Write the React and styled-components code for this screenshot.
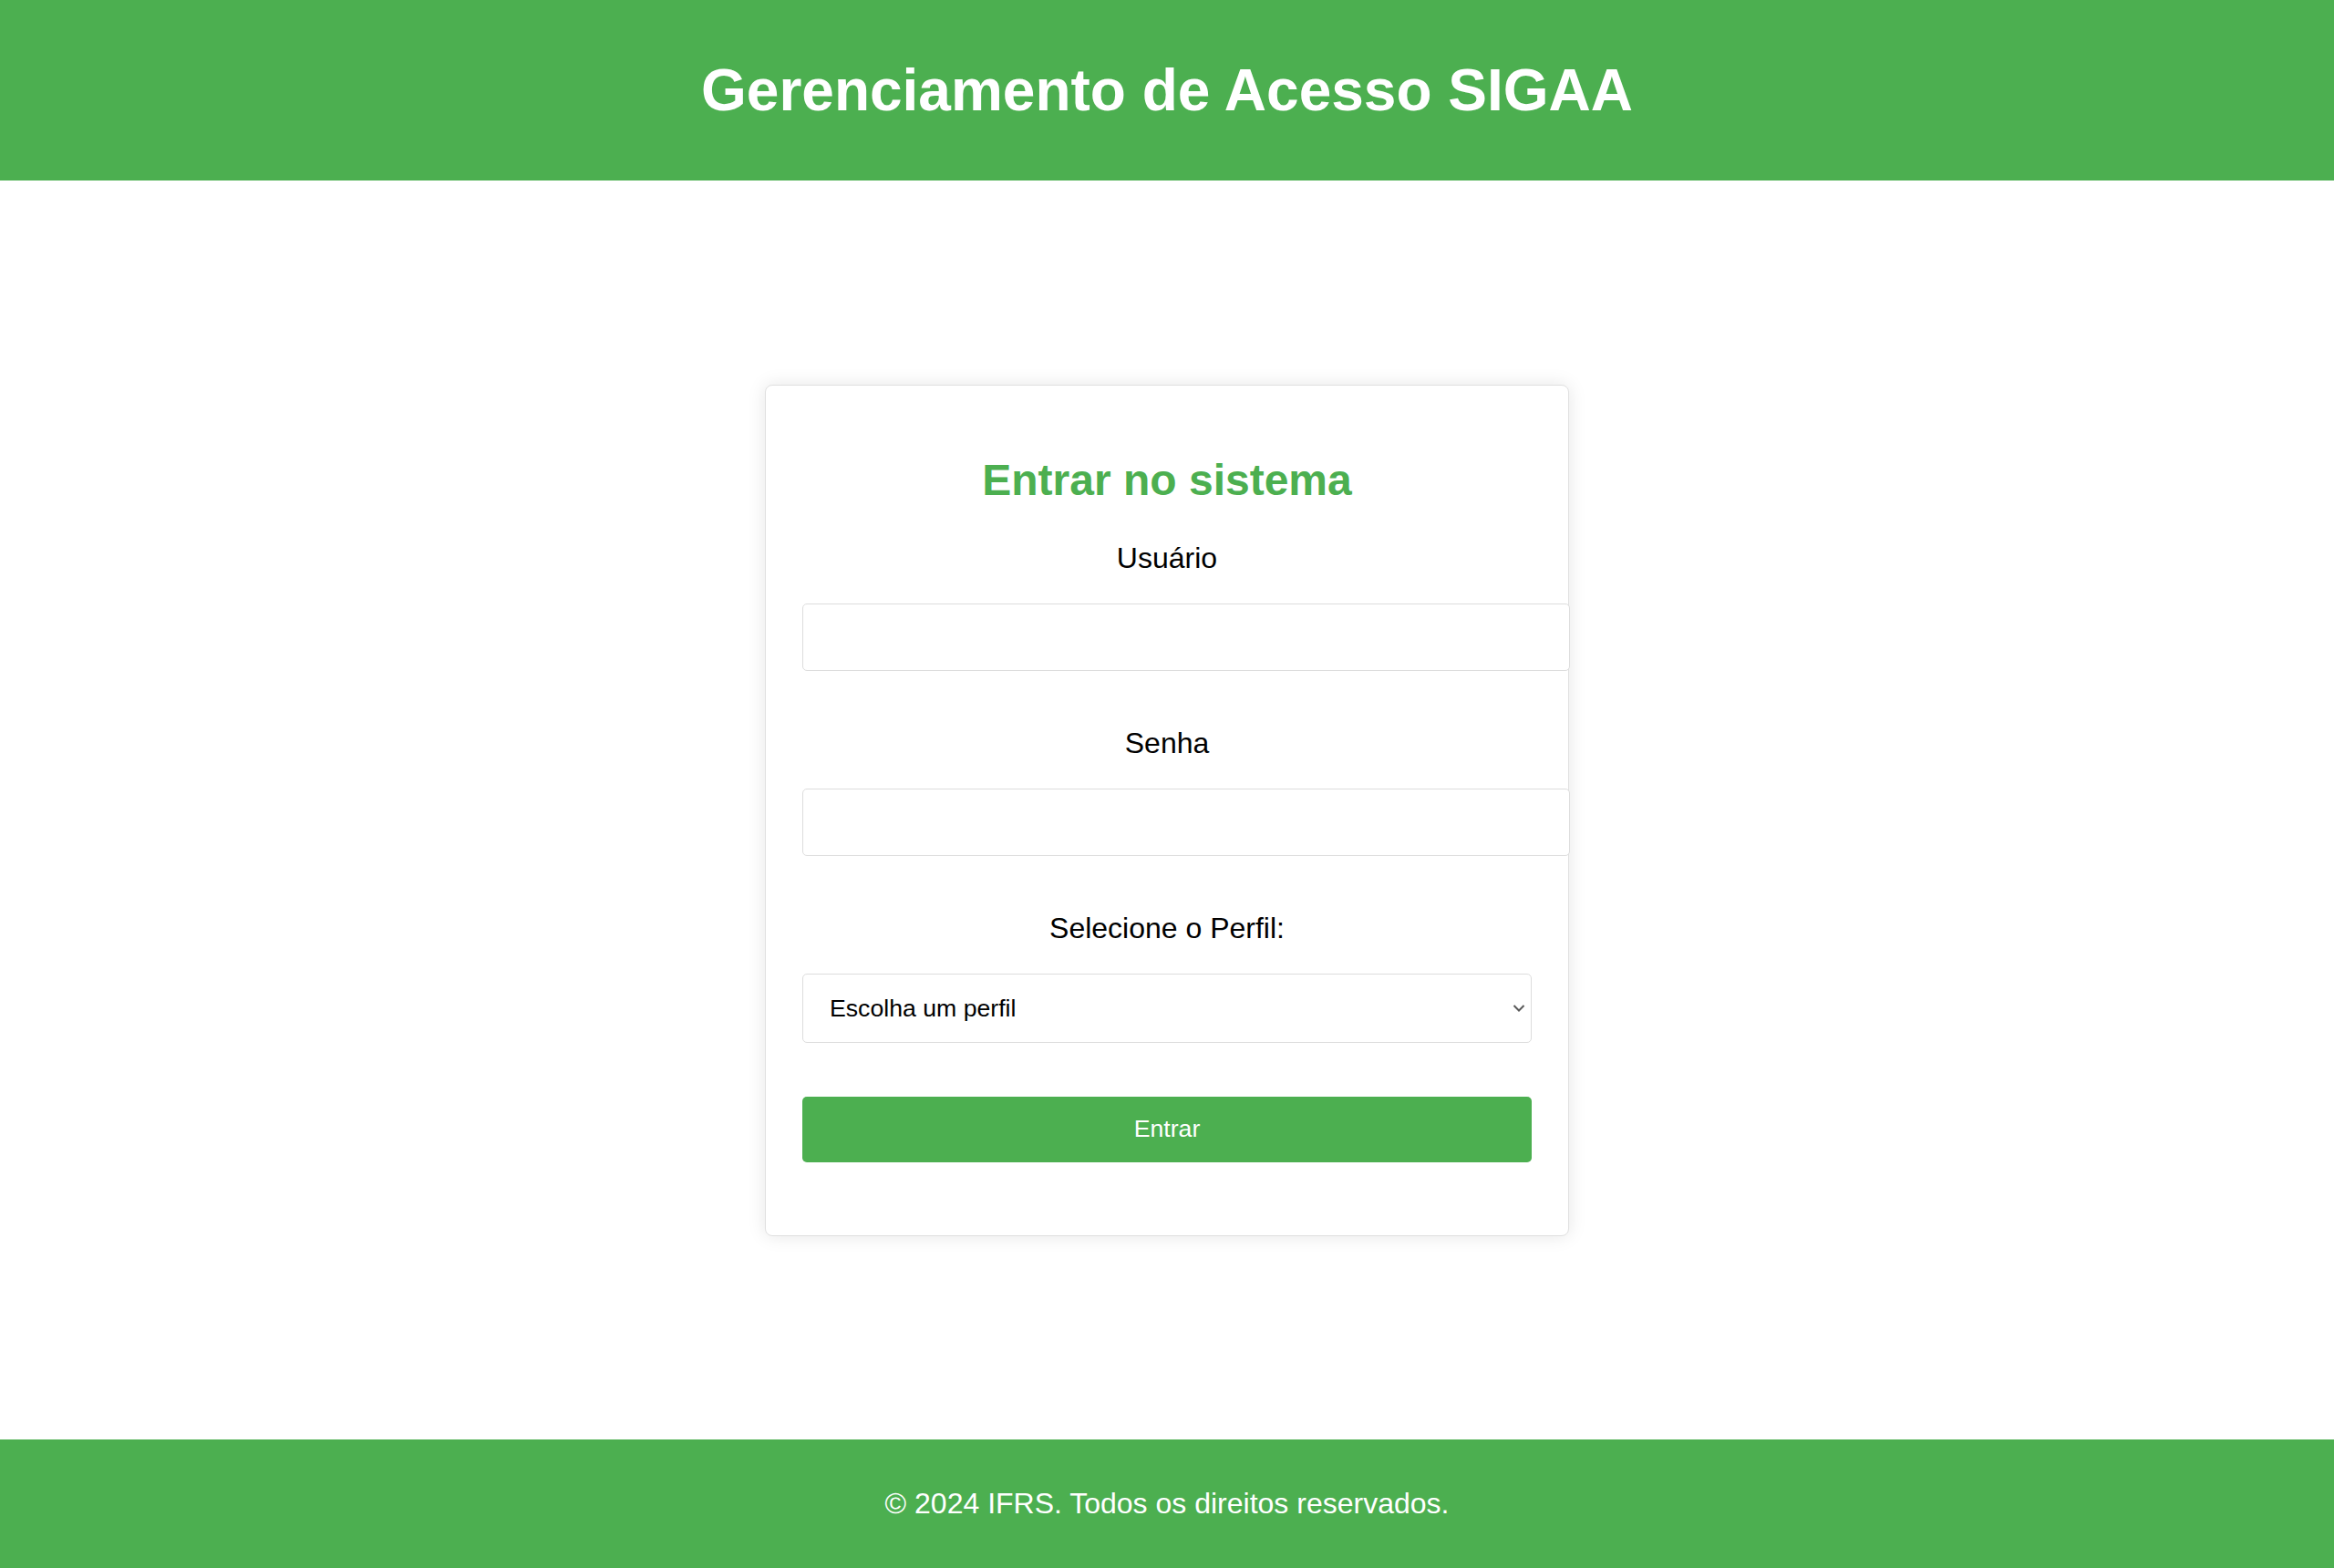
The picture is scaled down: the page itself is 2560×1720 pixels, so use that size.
import React from 'react';
import styled, { createGlobalStyle } from 'styled-components';

const GlobalStyle = createGlobalStyle`
    body {
        margin: 0;
        font-family: "Liberation Sans", Arial, sans-serif;
        background: #ffffff;
        color: #000000;
    }
`;

const Page = styled.div`
    min-height: 100vh;
    display: flex;
    flex-direction: column;
`;

const Header = styled.header`
    height: 198px;
    background-color: #4caf50;
    color: #ffffff;
    display: flex;
    align-items: center;
    justify-content: center;
`;

const Title = styled.h1`
    margin: 0;
    font-size: 64px;
    font-weight: 700;
`;

const Main = styled.main`
    flex: 1;
    display: flex;
    align-items: center;
    justify-content: center;
`;

const Card = styled.div`
    width: 800px;
    padding: 40px;
    background: #ffffff;
    border: 1px solid #e0e0e0;
    border-radius: 8px;
    box-shadow: 0 0 20px rgba(0, 0, 0, 0.1);
`;

const CardTitle = styled.h2`
    margin: 36px 0 40px;
    text-align: center;
    font-size: 48px;
    font-weight: 700;
    color: #4caf50;
`;

const Form = styled.form`
    display: flex;
    flex-direction: column;
`;

const Field = styled.div`
    margin-bottom: ${props => props.last ? '0' : '61px'};
`;

const Label = styled.label`
    display: block;
    text-align: center;
    font-size: 32px;
    margin-bottom: 31px;
`;

const Input = styled.input`
    display: block;
    box-sizing: content-box;
    width: 100%;
    height: 32px;
    padding: 20px;
    border: 1px solid #dddddd;
    border-radius: 5px;
    font-family: "Liberation Sans", Arial, sans-serif;
    font-size: 26.67px;
    outline: none;
`;

const SelectWrap = styled.div`
    position: relative;
`;

const Select = styled.select`
    display: block;
    box-sizing: border-box;
    width: 100%;
    height: 76px;
    padding: 0 40px 0 29px;
    border: 1px solid #dddddd;
    border-radius: 5px;
    background: #ffffff;
    color: #000000;
    font-family: "Liberation Sans", Arial, sans-serif;
    font-size: 26.67px;
    appearance: none;
    -webkit-appearance: none;
    outline: none;
`;

const Chevron = styled.svg`
    position: absolute;
    right: 7px;
    top: 50%;
    transform: translateY(-50%);
    pointer-events: none;
`;

const Button = styled.button`
    margin: 59px 0 40px;
    width: 100%;
    height: 72px;
    border: none;
    border-radius: 5px;
    background-color: #4caf50;
    color: #ffffff;
    font-family: "Liberation Sans", Arial, sans-serif;
    font-size: 26.67px;
    cursor: pointer;
`;

const Footer = styled.footer`
    height: 141px;
    background-color: #4caf50;
    color: #ffffff;
    display: flex;
    align-items: center;
    justify-content: center;
    font-size: 32px;
`;

const App = () => {
    return (
        <Page>
            <GlobalStyle />
            <Header>
                <Title>Gerenciamento de Acesso SIGAA</Title>
            </Header>
            <Main>
                <Card>
                    <CardTitle>Entrar no sistema</CardTitle>
                    <Form onSubmit={e => e.preventDefault()}>
                        <Field>
                            <Label htmlFor="usuario">Usuário</Label>
                            <Input id="usuario" type="text" />
                        </Field>
                        <Field>
                            <Label htmlFor="senha">Senha</Label>
                            <Input id="senha" type="password" />
                        </Field>
                        <Field last>
                            <Label htmlFor="perfil">Selecione o Perfil:</Label>
                            <SelectWrap>
                                <Select id="perfil" defaultValue="">
                                    <option value="">Escolha um perfil</option>
                                    <option value="aluno">Aluno</option>
                                    <option value="professor">Professor</option>
                                    <option value="admin">Administrador</option>
                                </Select>
                                <Chevron width="14" height="9" viewBox="0 0 14 9">
                                    <path d="M1.5 1.5 L7 7 L12.5 1.5" fill="none" stroke="#595959" strokeWidth="2" />
                                </Chevron>
                            </SelectWrap>
                        </Field>
                        <Button type="submit">Entrar</Button>
                    </Form>
                </Card>
            </Main>
            <Footer>© 2024 IFRS. Todos os direitos reservados.</Footer>
        </Page>
    );
}

export default App;
